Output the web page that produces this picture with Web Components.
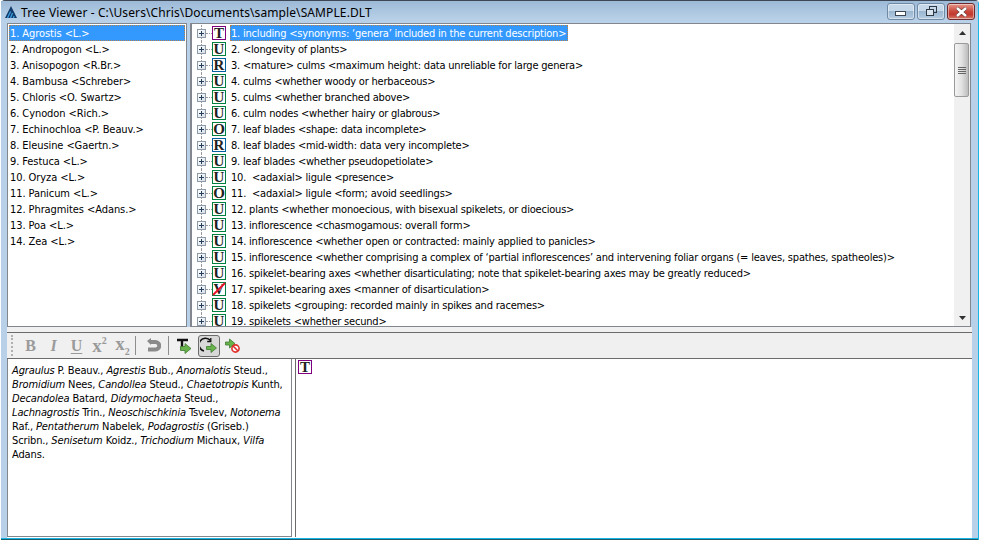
<!DOCTYPE html>
<html>
<head>
<meta charset="utf-8">
<style>
html, body { margin: 0; padding: 0; height: 100%; background: #fff; overflow: hidden; }
body { font-family: "DejaVu Sans Condensed", "DejaVu Sans", sans-serif; }
</style>
</head>
<body>
<tv-window>
  <tv-titlebar slot="title">Tree Viewer - C:\Users\Chris\Documents\sample\SAMPLE.DLT</tv-titlebar>
  <tv-list slot="list"></tv-list>
  <tv-tree slot="tree"></tv-tree>
  <tv-toolbar slot="toolbar"></tv-toolbar>
  <tv-notes slot="notes">
    <i>Agraulus</i> P. Beauv., <i>Agrestis</i> Bub., <i>Anomalotis</i> Steud.,<br>
    <i>Bromidium</i> Nees, <i>Candollea</i> Steud., <i>Chaetotropis</i> Kunth,<br>
    <i>Decandolea</i> Batard, <i>Didymochaeta</i> Steud.,<br>
    <i>Lachnagrostis</i> Trin., <i>Neoschischkinia</i> Tsvelev, <i>Notonema</i><br>
    Raf., <i>Pentatherum</i> Nabelek, <i>Podagrostis</i> (Griseb.)<br>
    Scribn., <i>Senisetum</i> Koidz., <i>Trichodium</i> Michaux, <i>Vilfa</i><br>
    Adans.
  </tv-notes>
  <tv-status slot="status"><tv-badge letter="T"></tv-badge></tv-status>
</tv-window>

<script>
const UI_FONT = '"DejaVu Sans Condensed", "DejaVu Sans", sans-serif';

// Fenster mit Slots
class TvWindow extends HTMLElement {
  constructor() {
    super();
    this.attachShadow({ mode: 'open' });
    this.shadowRoot.innerHTML = `
      <style>
        :host { display: flex; flex-direction: column; width: 978px; height: 540px; margin-left: 1px; box-sizing: border-box;
          background: #b9d1e8; border-top: 1px solid #3c4654; border-right: 1px solid #17b4e6; border-radius: 4px 4px 0 0; }
        .body { flex: 1; display: flex; flex-direction: column; margin: 0 6px; min-height: 0; }
        .top { display: flex; height: 304px; flex: none; gap: 3px; margin-right: 1px; }
        .bottom { flex: 1; display: flex; min-height: 0; background: #fff; padding-bottom: 1px; }
        .edge { height: 2px; flex: none; background: linear-gradient(#17b4e6 50%, #1d5c68 50%); }
        .gap { height: 5px; flex: none; background: #f0f0f0; }
      </style>
      <slot name="title"></slot>
      <div class="body">
        <div class="top"><slot name="list"></slot><slot name="tree"></slot></div>
        <div class="gap"></div>
        <slot name="toolbar"></slot>
        <div class="bottom"><slot name="notes"></slot><slot name="status"></slot></div>
      </div>
      <div class="edge"></div>
    `;
  }
}

// Titelleiste
class TvTitlebar extends HTMLElement {
  constructor() {
    super();
    this.attachShadow({ mode: 'open' });
    this.shadowRoot.innerHTML = `
      <style>
        :host { display: flex; align-items: center; height: 22px; flex: none; box-sizing: border-box;
          padding: 0 3px 0 4px; background: linear-gradient(#9cb9d6, #b4cde5 70%, #bad2e9);
          font: 12px "Noto Sans", sans-serif; color: #000; }
        .ic { width: 12px; height: 12px; margin-right: 4px; flex: none; }
        .t { flex: 1; letter-spacing: .1px; white-space: nowrap; }
        .btns { display: flex; gap: 2px; align-self: flex-start; margin-top: 2px; }
        .b { height: 17px; width: 28px; box-sizing: border-box; border: 1px solid #6f8aa5;
          border-radius: 3px; display: flex; align-items: center; justify-content: center;
          background: linear-gradient(#c5d8ea 45%, #9ab6d1 50%, #b5cde2); box-shadow: inset 0 0 0 1px rgba(255,255,255,.45); }
        .x { border-color: #6e2a2a; background: linear-gradient(#e49a8c, #c9463a 50%, #c23a30 70%, #d47a6a); }
      </style>
      <svg class="ic" viewBox="0 0 12 12">
        <path d="M6 0 12 12H0Z" fill="#123a6a"/>
        <path d="M2.5 12 5.6 5.5M5.5 12 7.5 7M8.5 12 9 10" stroke="#3fa0e0" stroke-width="1.3"/>
      </svg>
      <div class="t"><slot></slot></div>
      <div class="btns">
        <div class="b"><svg width="12" height="6" viewBox="0 0 12 6" style="margin-top:5px"><rect x=".5" y=".5" width="10" height="4" fill="#fff" stroke="#3c4654"/></svg></div>
        <div class="b"><svg width="12" height="11" viewBox="0 0 12 11">
          <rect x="4.5" y=".5" width="7" height="6" fill="none" stroke="#2f3a46"/>
          <rect x="1.5" y="3.5" width="7" height="6" fill="#d8e4ee" stroke="#2f3a46"/>
        </svg></div>
        <div class="b x"><svg width="13" height="10" viewBox="0 0 13 10"><path d="M2 1 11 9M11 1 2 9" stroke="#4a2a2a" stroke-width="3.6"/><path d="M2 1 11 9M11 1 2 9" stroke="#fff" stroke-width="2.6"/></svg></div>
      </div>
    `;
  }
}

// Taxa-Liste links
const TAXA = ['1. Agrostis <L.>','2. Andropogon <L.>','3. Anisopogon <R.Br.>','4. Bambusa <Schreber>','5. Chloris <O. Swartz>','6. Cynodon <Rich.>','7. Echinochloa <P. Beauv.>','8. Eleusine <Gaertn.>','9. Festuca <L.>','10. Oryza <L.>','11. Panicum <L.>','12. Phragmites <Adans.>','13. Poa <L.>','14. Zea <L.>'];

class TvList extends HTMLElement {
  constructor() {
    super();
    this.attachShadow({ mode: 'open' });
    this.shadowRoot.innerHTML = `
      <style>
        :host { display: block; width: 180px; height: 304px; box-sizing: border-box; flex: none; background: #fff;
          border: 1px solid #82878f; padding: 1px; overflow: hidden;
          font: 11px ${UI_FONT}; letter-spacing: -.08px; color: #000; }
        div { height: 16px; line-height: 18px; padding-left: 1px; white-space: nowrap; }
        .sel { background: #3399ff; color: #fff; outline: 1px dotted #b08050; outline-offset: -1px; }
      </style>
    `;
    TAXA.forEach((t, i) => {
      const d = document.createElement('div');
      d.textContent = t;
      if (i === 0) d.className = 'sel';
      this.shadowRoot.appendChild(d);
    });
  }
}

// Buchstaben-Kästchen
const BADGE_COLOURS = { T: '#7f007f', U: '#008040', R: '#0060a0', O: '#008040', V: '#008040' };

class TvBadge extends HTMLElement {
  connectedCallback() {
    if (this.shadowRoot) return;
    this.attachShadow({ mode: 'open' });
    const l = this.getAttribute('letter');
    this.shadowRoot.innerHTML = `
      <style>
        :host { display: inline-flex; width: 14px; height: 14px; box-sizing: border-box; flex: none; position: relative;
          align-items: center; justify-content: center; background: #fff;
          border: 1px solid ${BADGE_COLOURS[l]};
          font: bold 15px/12px "Liberation Serif", serif; letter-spacing: 0; color: #222; }
        svg { position: absolute; left: -1px; top: -1px; }
      </style>
      ${l}
      ${this.hasAttribute('struck') ? '<svg width="14" height="14" viewBox="0 0 14 14"><path d="M1 13 13 1" stroke="#e8142c" stroke-width="2"/></svg>' : ''}
    `;
  }
}

// Eine Zeile im Baum
class TvTreeRow extends HTMLElement {
  constructor() {
    super();
    this.attachShadow({ mode: 'open' });
    this.shadowRoot.innerHTML = `
      <style>
        :host { display: flex; align-items: center; height: 16px; white-space: nowrap; position: relative; }
        .vline { position: absolute; left: 9px; top: 0; bottom: 0; border-left: 1px dotted #9a9a9a; }
        .exp { width: 9px; height: 9px; box-sizing: border-box; border: 1px solid #8d9aa8; background: linear-gradient(135deg, #fff, #d6dde6);
          margin-left: 5px; position: relative; display: block; flex: none; }
        .exp svg { display: block; }
        .dash { width: 6px; border-top: 1px dotted #9a9a9a; flex: none; }
        .txt { margin-left: 4px; padding: 0 2px 0 1px; height: 16px; line-height: 18px; white-space: pre; }
        :host([selected]) .txt { background: #3399ff; color: #fff; outline: 1px dotted #b08050; outline-offset: -1px; }
      </style>
      <span class="vline"></span>
      <span class="exp"><svg width="7" height="7" viewBox="0 0 7 7"><path d="M1 3.5h5M3.5 1v5" stroke="#24405c"/></svg></span>
      <span class="dash"></span>
      <slot name="badge"></slot>
      <span class="txt"><slot></slot></span>
    `;
  }
}

const CHARS = [
  ['T','1. including <synonyms: \u2018genera\u2019 included in the current description>'],
  ['U','2. <longevity of plants>'],
  ['R','3. <mature> culms <maximum height: data unreliable for large genera>'],
  ['U','4. culms <whether woody or herbaceous>'],
  ['U','5. culms <whether branched above>'],
  ['U','6. culm nodes <whether hairy or glabrous>'],
  ['O','7. leaf blades <shape: data incomplete>'],
  ['R','8. leaf blades <mid-width: data very incomplete>'],
  ['U','9. leaf blades <whether pseudopetiolate>'],
  ['U','10.  <adaxial> ligule <presence>'],
  ['O','11.  <adaxial> ligule <form; avoid seedlings>'],
  ['U','12. plants <whether monoecious, with bisexual spikelets, or dioecious>'],
  ['U','13. inflorescence <chasmogamous: overall form>'],
  ['U','14. inflorescence <whether open or contracted: mainly applied to panicles>'],
  ['U','15. inflorescence <whether comprising a complex of \u2018partial inflorescences\u2019 and intervening foliar organs (= leaves, spathes, spatheoles)>'],
  ['U','16. spikelet-bearing axes <whether disarticulating; note that spikelet-bearing axes may be greatly reduced>'],
  ['V','17. spikelet-bearing axes <manner of disarticulation>'],
  ['U','18. spikelets <grouping: recorded mainly in spikes and racemes>'],
  ['U','19. spikelets <whether secund>'],
];

// Baum mit Scrollleiste
class TvTree extends HTMLElement {
  constructor() {
    super();
    this.attachShadow({ mode: 'open' });
    this.shadowRoot.innerHTML = `
      <style>
        :host { display: flex; flex: 1; min-width: 0; height: 304px; box-sizing: border-box; background: #fff;
          border: 1px solid #82878f; border-left: 2px solid #82878f; overflow: hidden;
          font: 11px ${UI_FONT}; letter-spacing: -.2px; color: #000; }
        .rows { flex: 1; min-width: 0; padding-top: 1px; overflow: hidden; }
      </style>
      <div class="rows"><slot></slot></div>
      <tv-scrollbar></tv-scrollbar>
    `;
    CHARS.forEach((c, i) => {
      const r = document.createElement('tv-tree-row');
      if (i === 0) r.setAttribute('selected', '');
      const b = document.createElement('tv-badge');
      b.setAttribute('letter', c[0]);
      if (c[0] === 'V') b.setAttribute('struck', '');
      b.slot = 'badge';
      r.appendChild(b);
      r.appendChild(document.createTextNode(c[1]));
      this.appendChild(r);
    });
  }
}

class TvScrollbar extends HTMLElement {
  constructor() {
    super();
    this.attachShadow({ mode: 'open' });
    this.shadowRoot.innerHTML = `
      <style>
        :host { display: flex; flex-direction: column; width: 16px; flex: none; background: #f0f0f0; box-sizing: border-box; }
        .arr { height: 17px; display: flex; align-items: center; justify-content: center; flex: none; }
        .thumb { height: 54px; margin: 2px 1px 0 0; box-sizing: border-box; border: 1px solid #9a9a9a; border-radius: 2px;
          background: linear-gradient(90deg, #f4f4f4, #e2e2e2 50%, #bcbcbc); display: flex; align-items: center; justify-content: center; }
        .sp { flex: 1; }
      </style>
      <div class="arr"><svg width="7" height="4"><path d="M3.5 0 7 4H0Z" fill="#303030"/></svg></div>
      <div class="thumb"><svg width="8" height="9" viewBox="0 0 8 9"><path d="M0 1.5h8M0 3.5h8M0 5.5h8M0 7.5h8" stroke="#666"/></svg></div>
      <div class="sp"></div>
      <div class="arr"><svg width="7" height="4"><path d="M0 0H7L3.5 4Z" fill="#303030"/></svg></div>
    `;
  }
}

// Werkzeugleiste
class TvToolbar extends HTMLElement {
  constructor() {
    super();
    this.attachShadow({ mode: 'open' });
    this.shadowRoot.innerHTML = `
      <style>
        :host { display: flex; align-items: center; height: 27px; flex: none; box-sizing: border-box;
          background: #f0f0f0; border-top: 1px solid #6b6b6b; border-bottom: 1px solid #6b6b6b;
          font: bold 16px "Liberation Serif", serif; color: #9a9a9a; padding-left: 4px; }
        .grip { width: 2px; height: 21px; margin-right: 4px; border-left: 2px dotted #b0b0b0; }
        .b { width: 23px; height: 21px; display: flex; align-items: center; justify-content: center; flex: none; box-sizing: border-box; }
        .big { font-size: 19px; line-height: 19px; }
        sup, sub { font-size: 10px; line-height: 0; }
        sup { position: relative; top: -1px; }
        .sep { width: 1px; height: 19px; background: #8e8e8e; flex: none; }
        .on { width: 22px; height: 22px; border: 1px solid #6b6b6b; border-radius: 3px; background: #d8d8d8; }
        u { text-decoration-thickness: 1px; text-underline-offset: 2px; }
      </style>
      <span class="grip"></span>
      <span class="b">B</span>
      <span class="b"><i>I</i></span>
      <span class="b"><u>U</u></span>
      <span class="b big"><span>x<sup>2</sup></span></span>
      <span class="b big"><span style="position:relative;top:-2px">x<sub>2</sub></span></span>
      <span class="sep" style="margin:0 11px 0 1px"></span>
      <svg width="14" height="15" viewBox="0 0 14 15" style="flex:none">
        <path d="M3 4H8.5A3.5 3.5 0 0 1 8.5 11.5H1" fill="none" stroke="#8a8a8a" stroke-width="4"/>
        <path d="M0 3 4 0V7Z" fill="#8a8a8a"/>
      </svg>
      <span class="sep" style="margin:0 8px 0 7px"></span>
      <svg width="15" height="16" viewBox="0 0 15 16" style="flex:none;margin-right:6px">
        <path d="M0 2H11M5 2V11" stroke="#111" stroke-width="2.4" fill="none"/>
        <path d="M3.5 8.5H8V5.5L14 10.5 8 15.5V12.5H3.5Z" fill="#69b34c" stroke="#3c7a30" stroke-width=".8"/>
      </svg>
      <span class="b on"><svg width="18" height="18" viewBox="0 0 18 18">
        <path d="M10.5 3.5A6.5 6.5 0 1 0 4 14" fill="none" stroke="#111" stroke-width="1.6"/><path d="M10.8 1V4.5H7.2" fill="none" stroke="#111" stroke-width="1.3"/>
        <path d="M6.5 9.5H11V6.5L16.5 11 11 15.5V12.5H6.5Z" fill="#69b34c" stroke="#3c7a30" stroke-width=".8"/>
      </svg></span>
      <svg width="17" height="16" viewBox="0 0 17 16" style="flex:none;margin-left:5px">
        <path d="M.5 4H4.5V1L10 5.5 4.5 10V7H.5Z" fill="#69b34c" stroke="#3c7a30" stroke-width=".8"/>
        <circle cx="10.5" cy="10.5" r="3.6" fill="#fff" stroke="#e0302c" stroke-width="1.6"/>
        <path d="M8 8 13 13" stroke="#e0302c" stroke-width="1.6"/>
      </svg>
    `;
  }
}

// Notizfeld unten links
class TvNotes extends HTMLElement {
  constructor() {
    super();
    this.attachShadow({ mode: 'open' });
    this.shadowRoot.innerHTML = `
      <style>
        :host { display: block; width: 285px; flex: none; box-sizing: border-box; background: #fff;
          border: 1px solid #82878f; border-top: none; padding: 5px 4px;
          font: 11px/14px ${UI_FONT}; letter-spacing: -.13px; color: #000; white-space: nowrap; }
      </style>
      <slot></slot>
    `;
  }
}

// Feld unten rechts
class TvStatus extends HTMLElement {
  constructor() {
    super();
    this.attachShadow({ mode: 'open' });
    this.shadowRoot.innerHTML = `
      <style>
        :host { display: flex; align-items: flex-start; flex: 1; margin-left: 3px; box-sizing: border-box; background: #fff;
          border-left: 1px solid #6b6b6b; padding: 1px 2px; }
      </style>
      <slot></slot>
    `;
  }
}

customElements.define('tv-window', TvWindow);
customElements.define('tv-titlebar', TvTitlebar);
customElements.define('tv-list', TvList);
customElements.define('tv-badge', TvBadge);
customElements.define('tv-tree-row', TvTreeRow);
customElements.define('tv-tree', TvTree);
customElements.define('tv-scrollbar', TvScrollbar);
customElements.define('tv-toolbar', TvToolbar);
customElements.define('tv-notes', TvNotes);
customElements.define('tv-status', TvStatus);
</script>
</body>
</html>
